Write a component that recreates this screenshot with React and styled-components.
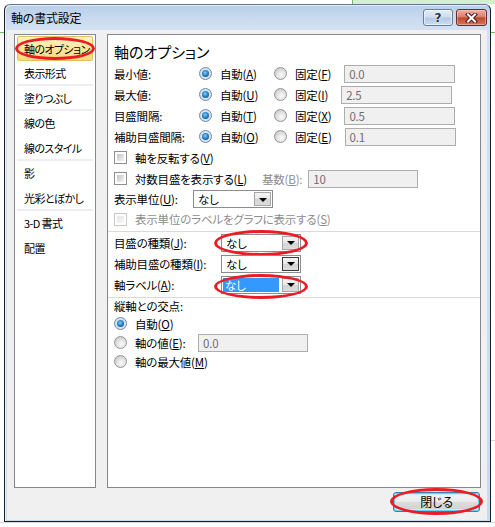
import React from 'react';
import styled, { createGlobalStyle, css } from 'styled-components';

const navItems = [
  { label: '軸のオプション', active: true },
  { label: '表示形式', sep: true },
  { label: '塗りつぶし', sep: true },
  { label: '線の色' },
  { label: '線のスタイル', sep: true },
  { label: '影' },
  { label: '光彩とぼかし', sep: true },
  { label: '3-D 書式' },
  { label: '配置' },
];

const valueRows = [
  { label: '最小値:', autoKey: 'A', fixKey: 'F', value: '0.0' },
  { label: '最大値:', autoKey: 'U', fixKey: 'I', value: '2.5' },
  { label: '目盛間隔:', autoKey: 'T', fixKey: 'X', value: '0.5' },
  { label: '補助目盛間隔:', autoKey: 'O', fixKey: 'E', value: '0.1' },
];

const App = () => {
  return (
    <>
      <GlobalStyle />
      <Desk>
        <Window>
          <TitleBar>
            <TitleText>軸の書式設定</TitleText>
            <CaptionButtons>
              <HelpButton>?</HelpButton>
              <CloseButton>
                <svg width="13" height="10" viewBox="0 0 13 10">
                  <path d="M3 1.5 L10 8.5 M10 1.5 L3 8.5" stroke="#4a1a14" strokeWidth="4" strokeLinecap="square" />
                  <path d="M3 1.5 L10 8.5 M10 1.5 L3 8.5" stroke="#fff" strokeWidth="2" strokeLinecap="square" />
                </svg>
              </CloseButton>
            </CaptionButtons>
          </TitleBar>

          <Client>
            <Panels>
              <NavPanel>
                {navItems.map((item) => (
                  <NavItem key={item.label} $active={item.active} $sep={item.sep}>
                    {item.label}
                    {item.active && <Ellipse $inset="0 -3px 0 -3px" />}
                  </NavItem>
                ))}
              </NavPanel>

              <OptionsPanel>
                <Heading>軸のオプション</Heading>

                {valueRows.map((row) => (
                  <Row key={row.label}>
                    <Label $w={85}>{row.label}</Label>
                    <Option $w={75}>
                      <Radio $on />
                      <span>
                        自動(<Key>{row.autoKey}</Key>)
                      </span>
                    </Option>
                    <Option>
                      <Radio />
                      <span>
                        固定(<Key>{row.fixKey}</Key>)
                      </span>
                    </Option>
                    <TextBox $w={111} $ml={13}>{row.value}</TextBox>
                  </Row>
                ))}

                <Row>
                  <Option>
                    <Check />
                    <span>
                      軸を反転する(<Key>V</Key>)
                    </span>
                  </Option>
                </Row>
                <Row>
                  <Option $w={148}>
                    <Check />
                    <span>
                      対数目盛を表示する(<Key>L</Key>)
                    </span>
                  </Option>
                  <Muted>
                    基数(<Key>B</Key>):
                  </Muted>
                  <TextBox $w={110} $ml={6}>10</TextBox>
                </Row>
                <Row $h={20}>
                  <Label $w={79}>
                    表示単位(<Key>U</Key>):
                  </Label>
                  <Select>
                    <SelectText>なし</SelectText>
                    <DropButton />
                  </Select>
                </Row>
                <Row $h={20}>
                  <Option>
                    <Check $disabled />
                    <Muted>
                      表示単位のラベルをグラフに表示する(<Key>S</Key>)
                    </Muted>
                  </Option>
                </Row>

                <Separator $mt={2} />

                <Row>
                  <Label $w={107}>
                    目盛の種類(<Key>J</Key>):
                  </Label>
                  <Select>
                    <SelectText>なし</SelectText>
                    <DropButton />
                    <Ellipse $inset="-5px -8px -5px -8px" />
                  </Select>
                </Row>
                <Row>
                  <Label $w={107}>
                    補助目盛の種類(<Key>I</Key>):
                  </Label>
                  <Select>
                    <SelectText>なし</SelectText>
                    <DropButton $hot />
                  </Select>
                </Row>
                <Row>
                  <Label $w={107}>
                    軸ラベル(<Key>A</Key>):
                  </Label>
                  <Select>
                    <SelectText $selected>なし</SelectText>
                    <DropButton />
                    <Ellipse $inset="-3px -8px -6px -8px" />
                  </Select>
                </Row>

                <Separator $mt={2} />

                <Row $h={16}>縦軸との交点:</Row>
                <Row $h={19}>
                  <Option>
                    <Radio $on />
                    <span>
                      自動(<Key>O</Key>)
                    </span>
                  </Option>
                </Row>
                <Row $h={19}>
                  <Option $w={84}>
                    <Radio />
                    <span>
                      軸の値(<Key>E</Key>):
                    </span>
                  </Option>
                  <TextBox $w={110}>0.0</TextBox>
                </Row>
                <Row $h={19}>
                  <Option>
                    <Radio />
                    <span>
                      軸の最大値(<Key>M</Key>)
                    </span>
                  </Option>
                </Row>
              </OptionsPanel>
            </Panels>

            <ButtonRow>
              <PushButton>
                閉じる
                <Ellipse $inset="-5px -4px -4px -4px" />
              </PushButton>
            </ButtonRow>
          </Client>
        </Window>
      </Desk>
    </>
  );
};

const GlobalStyle = createGlobalStyle`
  html, body {
    margin: 0;
    padding: 0;
    background: #fff;
  }
  body {
    font-family: "Noto Sans CJK JP", "Noto Sans", sans-serif;
    font-size: 11.5px;
    letter-spacing: -0.2px;
    color: #000;
    font-feature-settings: "palt";
  }
`;

const Desk = styled.div`
  width: 495px;
  height: 527px;
  box-sizing: border-box;
  padding: 4px 0 0 4px;
  overflow: hidden;
  background:
    linear-gradient(#6fbf5f, #6fbf5f) 352px 0 / 1px 5px no-repeat,
    linear-gradient(#d4efcc, #d4efcc) 353px 0 / 142px 4px no-repeat,
    linear-gradient(#6fbf5f, #6fbf5f) 0 32px / 4px 1px no-repeat,
    linear-gradient(#6fbf5f, #6fbf5f) 491px 32px / 4px 1px no-repeat,
    linear-gradient(#d9d9d9, #d9d9d9) 491px 440px / 4px 1px no-repeat,
    linear-gradient(#d9d9d9, #d9d9d9) 0 522px / 495px 1px no-repeat,
    #fff;
`;

const Window = styled.div`
  width: 487px;
  height: 518px;
  box-sizing: border-box;
  display: flex;
  flex-direction: column;
  padding: 0 3px 1px 2px;
  border: 1px solid #1c1f22;
  border-top-color: #65778a;
  border-radius: 6px 6px 0 0;
  background: linear-gradient(#b7cfe9 0, #c9dbef 14px, #d3e2f3 26px, #c6daf0 100%);
  box-shadow: inset 1px 1px 0 rgba(255, 255, 255, 0.6);
`;

const TitleBar = styled.div`
  height: 25px;
  flex: none;
  display: flex;
  align-items: center;
`;

const TitleText = styled.div`
  margin-left: 4px;
  font-size: 12px;
  line-height: 16px;
  color: #000;
`;

const CaptionButtons = styled.div`
  margin-left: auto;
  align-self: flex-start;
  margin-top: 4px;
  display: flex;
  gap: 3px;
`;

const captionBase = css`
  height: 17px;
  box-sizing: border-box;
  border-radius: 3px;
  display: flex;
  align-items: center;
  justify-content: center;
`;

const HelpButton = styled.div`
  ${captionBase};
  width: 30px;
  border: 1px solid #6a7d92;
  background: linear-gradient(#e4edf7 0, #cfdcec 48%, #b6cae3 52%, #cbdcef 100%);
  box-shadow: inset 0 0 0 1px rgba(255, 255, 255, 0.55);
  font-family: "DejaVu Sans", sans-serif;
  font-weight: bold;
  font-size: 12px;
  color: #22354b;
  text-shadow: 0 0 2px #fff, 0 0 1px #fff;
`;

const CloseButton = styled.div`
  ${captionBase};
  width: 31px;
  border: 1px solid #6b2a21;
  background: linear-gradient(#eab0a5 0, #d9806e 46%, #c3452f 52%, #d6755c 100%);
  box-shadow: inset 0 0 0 1px rgba(255, 220, 210, 0.45);
`;

const Client = styled.div`
  flex: 1;
  display: flex;
  flex-direction: column;
  background: #f0f0f0;
  padding: 4px 6px 8px 7px;
`;

const Panels = styled.div`
  height: 454px;
  display: flex;
  gap: 11px;
`;

const panelBase = css`
  box-sizing: border-box;
  background: #fff;
  border: 1px solid #828790;
`;

const NavPanel = styled.div`
  ${panelBase};
  width: 82px;
  padding: 1px;
  display: flex;
  flex-direction: column;
`;

const NavItem = styled.div`
  position: relative;
  height: 25px;
  box-sizing: border-box;
  margin: 0 1px;
  padding-left: 7px;
  display: flex;
  align-items: center;
  white-space: nowrap;
  font-size: 11px;
  letter-spacing: -0.6px;
  border-bottom: 2px solid ${(p) => (p.$sep ? '#eceef3' : 'transparent')};

  ${(p) =>
    p.$active &&
    css`
      padding-left: 6px;
      border: 1px solid #e2c062;
      border-radius: 2px;
      background: linear-gradient(#fff3c4 0, #fee79b 50%, #fdd979 100%);
    `}
`;

const OptionsPanel = styled.div`
  ${panelBase};
  width: 374px;
  padding-left: 6px;
  display: flex;
  flex-direction: column;
`;

const Heading = styled.div`
  padding-top: 6px;
  height: 22px;
  line-height: 22px;
  font-size: 15px;
  letter-spacing: 0;
`;

const Row = styled.div`
  height: ${(p) => p.$h || 21}px;
  flex: none;
  display: flex;
  align-items: center;
  white-space: nowrap;
  line-height: 16px;
`;

const Label = styled.div`
  width: ${(p) => p.$w}px;
  flex: none;
`;

const Option = styled.div`
  display: flex;
  align-items: center;
  gap: 8px;
  flex: none;
  ${(p) => p.$w && `width: ${p.$w}px;`}
`;

const Key = styled.span`
  text-decoration: underline;
`;

const Muted = styled.span`
  color: #8d8d8d;
`;

const Radio = styled.span`
  position: relative;
  flex: none;
  width: 13px;
  height: 13px;
  box-sizing: border-box;
  border-radius: 50%;
  border: 1px solid #949494;
  background: radial-gradient(circle at 60% 65%, #fbfbfb 0, #e2e2e2 45%, #bdbdbd 100%);

  ${(p) =>
    p.$on &&
    css`
      border-color: #6c8aa8;
      background: radial-gradient(circle at 50% 50%, #e6eef6 0, #cfdbe7 100%);

      &::after {
        content: '';
        position: absolute;
        left: 2px;
        top: 2px;
        width: 7px;
        height: 7px;
        border-radius: 50%;
        background: radial-gradient(circle at 45% 40%, #7fd2ff 0, #2a86cc 45%, #0c3a6a 100%);
      }
    `}
`;

const Check = styled.span`
  flex: none;
  width: 13px;
  height: 13px;
  box-sizing: border-box;
  padding: 2px;
  border: 1px solid ${(p) => (p.$disabled ? '#c9c9c9' : '#8f8f8f')};
  background: ${(p) =>
    p.$disabled
      ? 'linear-gradient(135deg, #e6e6e6, #f7f7f7) content-box, #fff'
      : 'linear-gradient(135deg, #c4c4c4, #f4f4f4) content-box, #fff'};
`;

const TextBox = styled.div`
  width: ${(p) => p.$w}px;
  margin-left: ${(p) => p.$ml || 0}px;
  height: 18px;
  box-sizing: border-box;
  flex: none;
  border: 1px solid #adadad;
  background: #f0f0f0;
  color: #6d6d6d;
  padding-left: 4px;
  line-height: 16px;
`;

const Select = styled.div`
  position: relative;
  width: 80px;
  height: 18px;
  box-sizing: border-box;
  flex: none;
  display: flex;
  border: 1px solid #8c8c8c;
  background: #fff;
`;

const SelectText = styled.div`
  flex: 1;
  line-height: 14px;
  margin: 1px 2px 1px 1px;
  padding-left: 3px;
  ${(p) =>
    p.$selected &&
    css`
      background: #3399ff;
      color: #fff;
      padding-left: 2px;
    `}
`;

const DropButton = styled.div`
  position: relative;
  width: 17px;
  margin: 1px;
  box-sizing: border-box;
  border: 1px solid ${(p) => (p.$hot ? '#3c3c3c' : '#a7a7a7')};
  background: linear-gradient(#f4f4f4 0, #e6e6e6 50%, #d4d4d4 51%, #dcdcdc 100%);
  display: flex;
  align-items: center;
  justify-content: center;

  &::after {
    content: '';
    width: 0;
    height: 0;
    margin-top: 1px;
    border-left: 4px solid transparent;
    border-right: 4px solid transparent;
    border-top: 4px solid #000;
  }
`;

const Separator = styled.div`
  height: 1px;
  flex: none;
  margin: ${(p) => p.$mt}px 0 0 -6px;
  background: #dadada;
`;

const ButtonRow = styled.div`
  margin-top: 4px;
  padding-right: 1px;
  display: flex;
  justify-content: flex-end;
`;

const PushButton = styled.div`
  position: relative;
  width: 87px;
  height: 20px;
  box-sizing: border-box;
  border: 1px solid #3c7fb1;
  border-radius: 3px;
  background: linear-gradient(#f3f3f3 0, #ebebeb 48%, #dddddd 52%, #cfcfcf 100%);
  box-shadow: inset 0 0 0 1px #5fd4f6, inset 0 0 0 2px #c6eefb;
  display: flex;
  align-items: center;
  justify-content: center;
  line-height: 16px;
  font-size: 12px;
`;

const Ellipse = styled.span`
  position: absolute;
  inset: ${(p) => p.$inset};
  border: 3px solid #ec1c24;
  border-radius: 50%;
  pointer-events: none;
`;

export default App;
